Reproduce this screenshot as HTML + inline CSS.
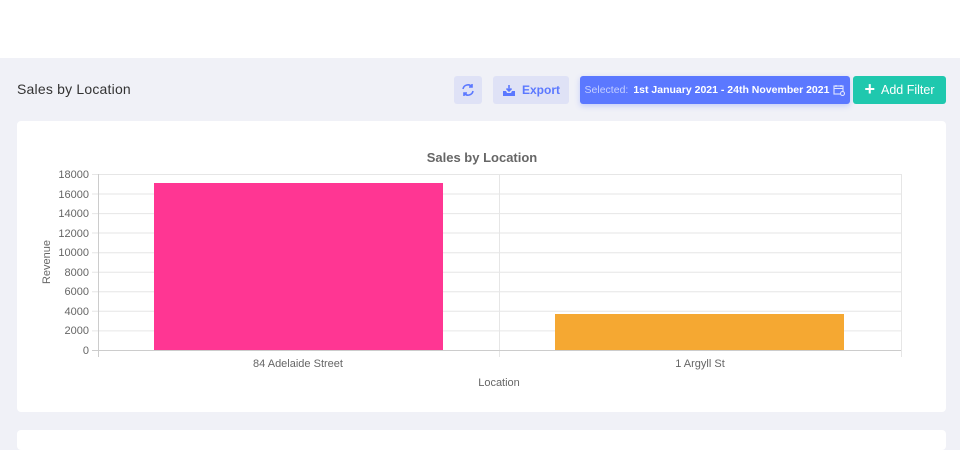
<!DOCTYPE html>
<html><head><style>
body{margin:0;width:960px;height:434px;background:#f0f1f7;font-family:"Liberation Sans",sans-serif;overflow:hidden;position:relative}
.top{position:absolute;left:0;top:0;width:960px;height:58px;background:#fff}
.title{position:absolute;left:17px;top:81px;font-size:14px;color:#333;letter-spacing:.2px}
.btn{position:absolute;top:76px;height:28px;border-radius:3px;display:flex;align-items:center;justify-content:center;font-size:12px;white-space:nowrap}
.card{position:absolute;left:17px;top:121px;width:929px;height:291px;background:#fff;border-radius:4px}
.card2{position:absolute;left:17px;top:430px;width:929px;height:20px;background:#fff;border-radius:4px}
.t{font-size:11px;fill:#666;font-family:"Liberation Sans",sans-serif}
</style></head><body>
<div class="top"></div>
<div class="title">Sales by Location</div>
<div class="btn" style="left:454px;width:28px;background:#dfe2f6">
<svg width="16" height="16" viewBox="0 0 16 16" fill="none" stroke="#5b78ff" stroke-width="1.6"><path d="M3 7a5 5 0 0 1 9-2M13 9a5 5 0 0 1-9 2"/><path d="M12 2v3h-3M4 14v-3h3"/></svg></div>
<div class="btn" style="left:493px;width:76px;background:#dfe2f6;color:#5b78ff;font-weight:bold">
<svg width="14" height="13" viewBox="0 0 14 13" style="margin-right:6px"><path d="M1 7v5h12V7h-3l-1 2H5L4 7z" fill="#5b78ff"/><path d="M7 1v6M4.5 4.5 7 7l2.5-2.5" stroke="#5b78ff" stroke-width="1.6" fill="none"/></svg>Export</div>
<div class="btn" style="left:580px;width:270px;background:#5b78ff;color:#fff;font-size:10.5px;font-weight:bold;box-shadow:0 2px 6px rgba(91,120,255,.3)"><span style="color:#c5cfff;font-weight:normal;margin-right:5px">Selected:</span>1st January 2021 - 24th November 2021
<svg width="12" height="12" viewBox="0 0 12 12" style="margin-left:4px" fill="none" stroke="#dfe4ff" stroke-width="1.1"><rect x="1" y="2" width="9" height="8"/><path d="M1 4.5h9M3 1v2M8 1v2"/><circle cx="9.5" cy="9.5" r="2" fill="#5b78ff"/></svg></div>
<div class="btn" style="left:853px;width:93px;background:#1fc8ae;color:#fff;font-size:12.5px"><span style="font-size:18px;font-weight:bold;margin-right:6px;margin-top:-2px">+</span>Add Filter</div>
<div class="card"></div>
<div class="card2"></div>
<svg style="position:absolute;left:0;top:0" width="960" height="434">
<text x="482" y="162" text-anchor="middle" style="font-size:13px;font-weight:bold;fill:#666;font-family:'Liberation Sans',sans-serif">Sales by Location</text>
<g stroke="#e6e6e6" stroke-width="1">
<line x1="92" x2="901" y1="174.5" y2="174.5"/><line x1="92" x2="901" y1="194" y2="194"/><line x1="92" x2="901" y1="213.6" y2="213.6"/><line x1="92" x2="901" y1="233" y2="233"/><line x1="92" x2="901" y1="252.7" y2="252.7"/><line x1="92" x2="901" y1="272.2" y2="272.2"/><line x1="92" x2="901" y1="291.8" y2="291.8"/><line x1="92" x2="901" y1="311.3" y2="311.3"/><line x1="92" x2="901" y1="330.9" y2="330.9"/>
<line x1="499.5" x2="499.5" y1="174" y2="357"/><line x1="901.5" x2="901.5" y1="174" y2="357"/>
</g>
<line x1="98.5" x2="98.5" y1="174" y2="357" stroke="#ccc"/>
<line x1="92" x2="901" y1="350.5" y2="350.5" stroke="#ccc"/>
<rect x="154" y="183" width="289" height="167" fill="#ff3693"/>
<rect x="555" y="314" width="289" height="36" fill="#f5a832"/>
<g class="t" text-anchor="end">
<text class="t" x="89" y="178">18000</text><text class="t" x="89" y="198">16000</text><text class="t" x="89" y="217">14000</text><text class="t" x="89" y="237">12000</text><text class="t" x="89" y="256">10000</text><text class="t" x="89" y="276">8000</text><text class="t" x="89" y="295">6000</text><text class="t" x="89" y="315">4000</text><text class="t" x="89" y="334">2000</text><text class="t" x="89" y="354">0</text>
</g>
<text class="t" x="298" y="367" text-anchor="middle">84 Adelaide Street</text>
<text class="t" x="700" y="367" text-anchor="middle">1 Argyll St</text>
<text class="t" x="499" y="386" text-anchor="middle">Location</text>
<text class="t" transform="translate(50,262) rotate(-90)" text-anchor="middle">Revenue</text>
</svg>
</body></html>
